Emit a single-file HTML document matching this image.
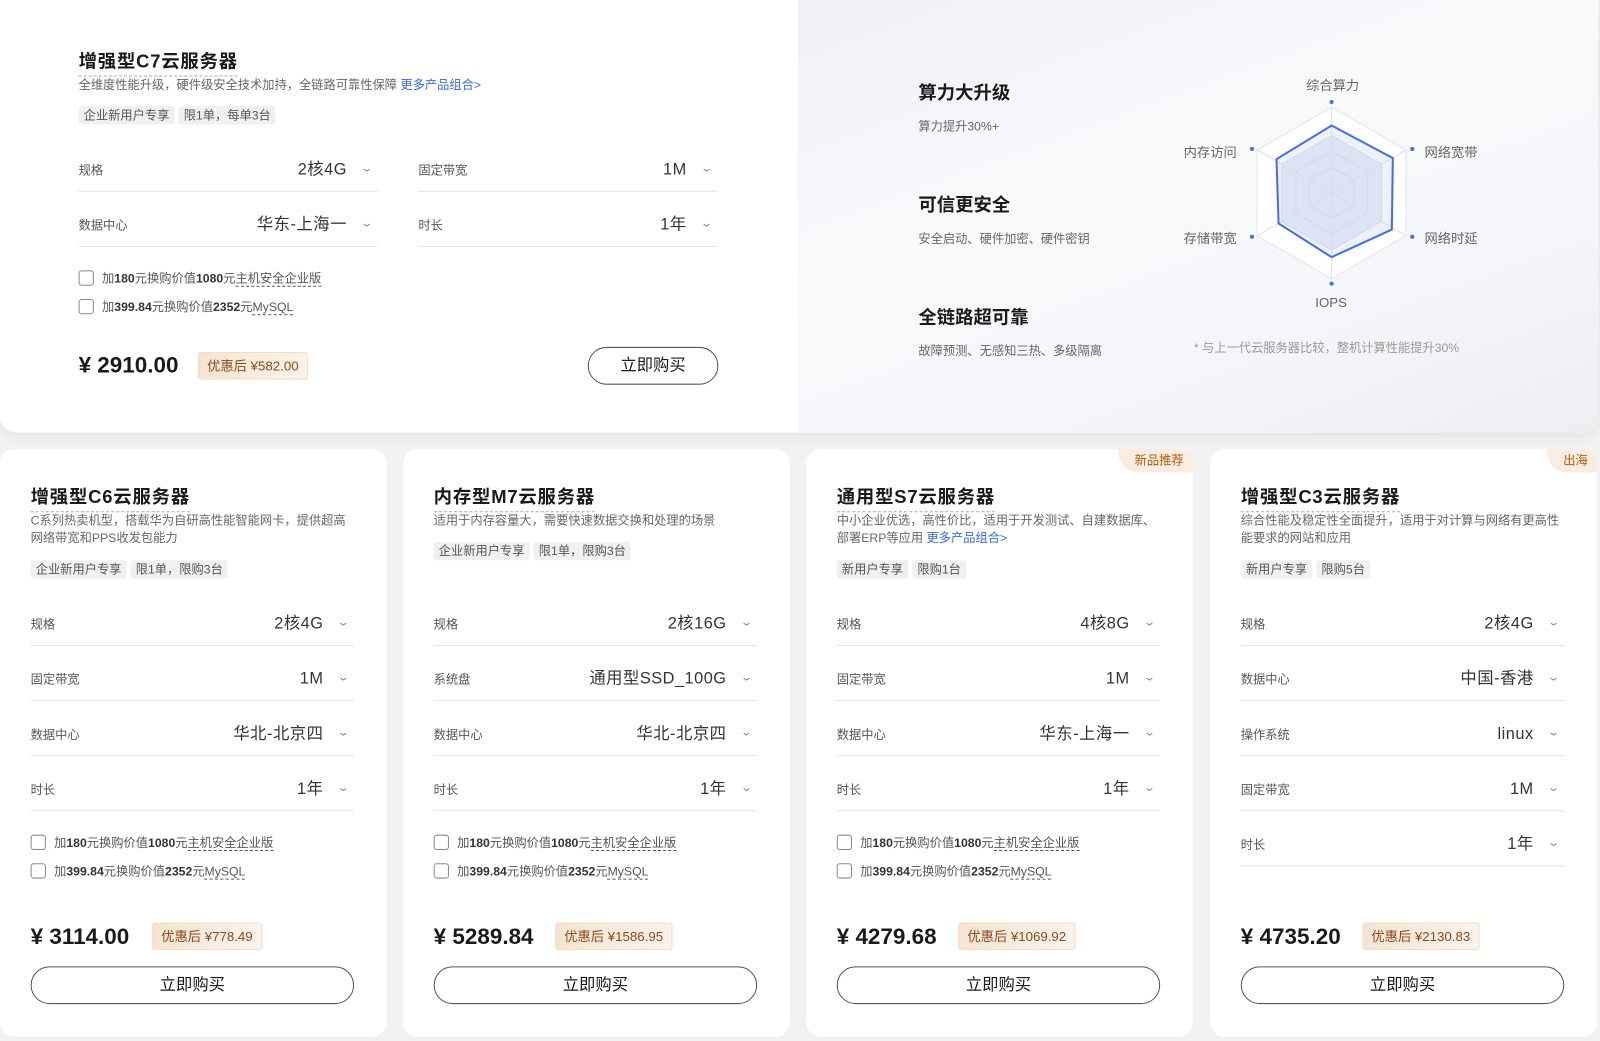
<!DOCTYPE html>
<html><head><meta charset="utf-8"><style>
*{margin:0;padding:0;box-sizing:border-box}
html,body{width:1600px;height:1041px;overflow:hidden;background:#f2f2f2}
#w{position:absolute;left:0;top:0;width:1568px;height:1020px;transform:scale(1.0204);transform-origin:0 0;font-family:"Liberation Sans","Noto Sans CJK SC",sans-serif;color:#252b3a}
.a{position:absolute;white-space:nowrap}
.top{position:absolute;left:0;top:0;width:1566px;height:424px;background:#fff;border-radius:0 0 16px 16px;overflow:hidden;box-shadow:0 4px 12px rgba(0,0,0,.06)}
.right{position:absolute;left:782px;top:0;width:784px;height:424px;background:linear-gradient(160deg,#f0f1f5 0%,#f8f9fb 40%,#f5f6f9 70%,#eceef2 100%)}
.card{position:absolute;top:440px;width:379px;height:576px;background:#fff;border-radius:14px;overflow:hidden}
.t{font-size:18px;font-weight:bold;color:#1a1a1a;border-bottom:1px dashed #aaa;padding-bottom:2px;letter-spacing:.8px}
.d{font-size:12px;color:#666;line-height:17px;white-space:normal}
.d b{color:#3a6ae8;font-weight:normal}
.tag{display:inline-block;background:#f0f0f0;color:#555;font-size:12px;padding:0 5px;height:18px;line-height:18px;border-radius:3px;margin-right:4px}
.row{position:absolute;height:54px;border-bottom:1px solid #e5e5e5}
.row .l{position:absolute;left:0;top:23px;font-size:12px;line-height:20px;color:#555}
.row .v{position:absolute;right:30px;top:23px;font-size:16px;line-height:20px;color:#333;letter-spacing:.5px}
.row .c{position:absolute;right:6px;top:21px;font-size:11px;line-height:20px;color:#888;transform:scaleX(1.4)}
.cb{position:absolute;font-size:12px;color:#555;white-space:nowrap}
.cb i{display:inline-block;width:15px;height:15px;border:1px solid #888;border-radius:3px;vertical-align:-3px;margin-right:8px}
.cb b{color:#333}
.cb u{text-decoration:none;border-bottom:1px dashed #555}
.price{position:absolute;font-size:22px;font-weight:bold;color:#1a1a1a}
.disc{position:absolute;font-size:13px;color:#8a4a1a;background:linear-gradient(90deg,#f5e3d2,#fdf3ea);border:1px solid #f5dcc4;border-radius:3px;height:27px;line-height:25px;padding:0 8px}
.btn{position:absolute;border:1px solid #555;border-radius:20px;height:37px;text-align:center;line-height:35px;font-size:16px;color:#1a1a1a}
.corner{position:absolute;right:0;top:0;height:23px;line-height:22px;font-size:12px;color:#b25a0a;background:#f8ede0;border-bottom-left-radius:20px;padding:0 9px 0 16px}
.fea{position:absolute;left:900px}
.fea h{display:block;font-size:18px;font-weight:bold;color:#1a1a1a}
.fea p{font-size:12px;color:#666;margin-top:12px}
.rl{position:absolute;font-size:13px;color:#666}
</style></head><body><div id="w">
<div class="top">
<div class="right"></div>
<div class="a t" style="left:77px;top:46px">增强型C7云服务器</div>
<div class="a d" style="left:77px;top:75px">全维度性能升级，硬件级安全技术加持，全链路可靠性保障 <b>更多产品组合&gt;</b></div>
<div class="a" style="left:77px;top:104px"><span class="tag">企业新用户专享</span><span class="tag">限1单，每单3台</span></div>
<div class="row" style="left:77px;top:134px;width:293px"><span class="l">规格</span><span class="v">2核4G</span><span class="c">⌄</span></div>
<div class="row" style="left:410px;top:134px;width:293px"><span class="l">固定带宽</span><span class="v">1M</span><span class="c">⌄</span></div>
<div class="row" style="left:77px;top:188px;width:293px"><span class="l">数据中心</span><span class="v">华东-上海一</span><span class="c">⌄</span></div>
<div class="row" style="left:410px;top:188px;width:293px"><span class="l">时长</span><span class="v">1年</span><span class="c">⌄</span></div>
<div class="cb" style="left:77px;top:264px"><i></i>加<b>180</b>元换购价值<b>1080</b>元<u>主机安全企业版</u></div>
<div class="cb" style="left:77px;top:292px"><i></i>加<b>399.84</b>元换购价值<b>2352</b>元<u>MySQL</u></div>
<div class="price" style="left:77px;top:345px">¥ 2910.00</div>
<div class="disc" style="left:194px;top:345px">优惠后 ¥582.00</div>
<div class="btn" style="left:576px;top:340px;width:128px">立即购买</div>

<div class="fea" style="top:77px"><h>算力大升级</h><p>算力提升30%+</p></div>
<div class="fea" style="top:187px"><h>可信更安全</h><p>安全启动、硬件加密、硬件密钥</p></div>
<div class="fea" style="top:297px"><h>全链路超可靠</h><p>故障预测、无感知三热、多级隔离</p></div>
<svg class="a" style="left:1205px;top:90px" width="200" height="200" viewBox="1205 90 200 200">
<polygon points="1305,105 1378,147 1378,231 1305,273 1232,231 1232,147" fill="#fff" stroke="#e6e6ea"/>
<polygon points="1305,133 1354,161 1354,217 1305,245 1256,217 1256,161" fill="#e3e8f4" stroke="#d8d8de"/>
<polygon points="1305,148 1340,168 1340,209 1305,229 1270,209 1270,168" fill="none" stroke="#d8d8de"/>
<polygon points="1305,164 1327,176 1327,201 1305,214 1283,201 1283,176" fill="none" stroke="#d8d8de"/>
<path d="M1305,105V273M1232,147L1378,231M1378,147L1232,231" stroke="#dedee4"/>
<polygon points="1305,123 1365,155 1364,225 1305,252 1253,219 1251,156" fill="rgba(210,220,245,.4)" stroke="#4a6de5" stroke-width="2"/>
<g fill="#4a6de5"><circle cx="1305" cy="100" r="2"/><circle cx="1384" cy="146" r="2"/><circle cx="1384" cy="232" r="2"/><circle cx="1305" cy="278" r="2"/><circle cx="1227" cy="232" r="2"/><circle cx="1227" cy="146" r="2"/></g>
</svg>
<div class="rl" style="left:1280px;top:73px">综合算力</div>
<div class="rl" style="left:1396px;top:139px">网络宽带</div>
<div class="rl" style="left:1396px;top:223px">网络时延</div>
<div class="rl" style="left:1289px;top:289px">IOPS</div>
<div class="rl" style="left:1160px;top:223px">存储带宽</div>
<div class="rl" style="left:1160px;top:139px">内存访问</div>
<div class="rl" style="left:1170px;top:332px;font-size:12px;color:#999">* 与上一代云服务器比较，整机计算性能提升30%</div>
</div>

<div class="card" style="left:0">
<div class="a t" style="left:30px;top:33px">增强型C6云服务器</div>
<div class="a d" style="left:30px;top:62px;width:318px">C系列热卖机型，搭载华为自研高性能智能网卡，提供超高网络带宽和PPS收发包能力</div>
<div class="a" style="left:30px;top:109px"><span class="tag">企业新用户专享</span><span class="tag">限1单，限购3台</span></div>
<div class="row" style="left:30px;top:139px;width:317px"><span class="l">规格</span><span class="v">2核4G</span><span class="c">⌄</span></div>
<div class="row" style="left:30px;top:193px;width:317px"><span class="l">固定带宽</span><span class="v">1M</span><span class="c">⌄</span></div>
<div class="row" style="left:30px;top:247px;width:317px"><span class="l">数据中心</span><span class="v">华北-北京四</span><span class="c">⌄</span></div>
<div class="row" style="left:30px;top:301px;width:317px"><span class="l">时长</span><span class="v">1年</span><span class="c">⌄</span></div>
<div class="cb" style="left:30px;top:377px"><i></i>加<b>180</b>元换购价值<b>1080</b>元<u>主机安全企业版</u></div>
<div class="cb" style="left:30px;top:405px"><i></i>加<b>399.84</b>元换购价值<b>2352</b>元<u>MySQL</u></div>
<div class="price" style="left:30px;top:465px">¥ 3114.00</div>
<div class="disc" style="left:149px;top:464px">优惠后 ¥778.49</div>
<div class="btn" style="left:30px;top:507px;width:317px">立即购买</div>
</div>
<div class="card" style="left:395px">
<div class="a t" style="left:30px;top:33px">内存型M7云服务器</div>
<div class="a d" style="left:30px;top:62px;width:320px">适用于内存容量大，需要快速数据交换和处理的场景</div>
<div class="a" style="left:30px;top:91px"><span class="tag">企业新用户专享</span><span class="tag">限1单，限购3台</span></div>
<div class="row" style="left:30px;top:139px;width:317px"><span class="l">规格</span><span class="v">2核16G</span><span class="c">⌄</span></div>
<div class="row" style="left:30px;top:193px;width:317px"><span class="l">系统盘</span><span class="v">通用型SSD_100G</span><span class="c">⌄</span></div>
<div class="row" style="left:30px;top:247px;width:317px"><span class="l">数据中心</span><span class="v">华北-北京四</span><span class="c">⌄</span></div>
<div class="row" style="left:30px;top:301px;width:317px"><span class="l">时长</span><span class="v">1年</span><span class="c">⌄</span></div>
<div class="cb" style="left:30px;top:377px"><i></i>加<b>180</b>元换购价值<b>1080</b>元<u>主机安全企业版</u></div>
<div class="cb" style="left:30px;top:405px"><i></i>加<b>399.84</b>元换购价值<b>2352</b>元<u>MySQL</u></div>
<div class="price" style="left:30px;top:465px">¥ 5289.84</div>
<div class="disc" style="left:149px;top:464px">优惠后 ¥1586.95</div>
<div class="btn" style="left:30px;top:507px;width:317px">立即购买</div>
</div>
<div class="card" style="left:790px">
<div class="corner">新品推荐</div>
<div class="a t" style="left:30px;top:33px">通用型S7云服务器</div>
<div class="a d" style="left:30px;top:62px;width:322px">中小企业优选，高性价比，适用于开发测试、自建数据库、部署ERP等应用 <b>更多产品组合&gt;</b></div>
<div class="a" style="left:30px;top:109px"><span class="tag">新用户专享</span><span class="tag">限购1台</span></div>
<div class="row" style="left:30px;top:139px;width:317px"><span class="l">规格</span><span class="v">4核8G</span><span class="c">⌄</span></div>
<div class="row" style="left:30px;top:193px;width:317px"><span class="l">固定带宽</span><span class="v">1M</span><span class="c">⌄</span></div>
<div class="row" style="left:30px;top:247px;width:317px"><span class="l">数据中心</span><span class="v">华东-上海一</span><span class="c">⌄</span></div>
<div class="row" style="left:30px;top:301px;width:317px"><span class="l">时长</span><span class="v">1年</span><span class="c">⌄</span></div>
<div class="cb" style="left:30px;top:377px"><i></i>加<b>180</b>元换购价值<b>1080</b>元<u>主机安全企业版</u></div>
<div class="cb" style="left:30px;top:405px"><i></i>加<b>399.84</b>元换购价值<b>2352</b>元<u>MySQL</u></div>
<div class="price" style="left:30px;top:465px">¥ 4279.68</div>
<div class="disc" style="left:149px;top:464px">优惠后 ¥1069.92</div>
<div class="btn" style="left:30px;top:507px;width:317px">立即购买</div>
</div>
<div class="card" style="left:1186px">
<div class="corner">出海</div>
<div class="a t" style="left:30px;top:33px">增强型C3云服务器</div>
<div class="a d" style="left:30px;top:62px;width:322px">综合性能及稳定性全面提升，适用于对计算与网络有更高性能要求的网站和应用</div>
<div class="a" style="left:30px;top:109px"><span class="tag">新用户专享</span><span class="tag">限购5台</span></div>
<div class="row" style="left:30px;top:139px;width:317px"><span class="l">规格</span><span class="v">2核4G</span><span class="c">⌄</span></div>
<div class="row" style="left:30px;top:193px;width:317px"><span class="l">数据中心</span><span class="v">中国-香港</span><span class="c">⌄</span></div>
<div class="row" style="left:30px;top:247px;width:317px"><span class="l">操作系统</span><span class="v">linux</span><span class="c">⌄</span></div>
<div class="row" style="left:30px;top:301px;width:317px"><span class="l">固定带宽</span><span class="v">1M</span><span class="c">⌄</span></div>
<div class="row" style="left:30px;top:355px;width:317px"><span class="l">时长</span><span class="v">1年</span><span class="c">⌄</span></div>
<div class="price" style="left:30px;top:465px">¥ 4735.20</div>
<div class="disc" style="left:149px;top:464px">优惠后 ¥2130.83</div>
<div class="btn" style="left:30px;top:507px;width:317px">立即购买</div>
</div>
</div></body></html>
